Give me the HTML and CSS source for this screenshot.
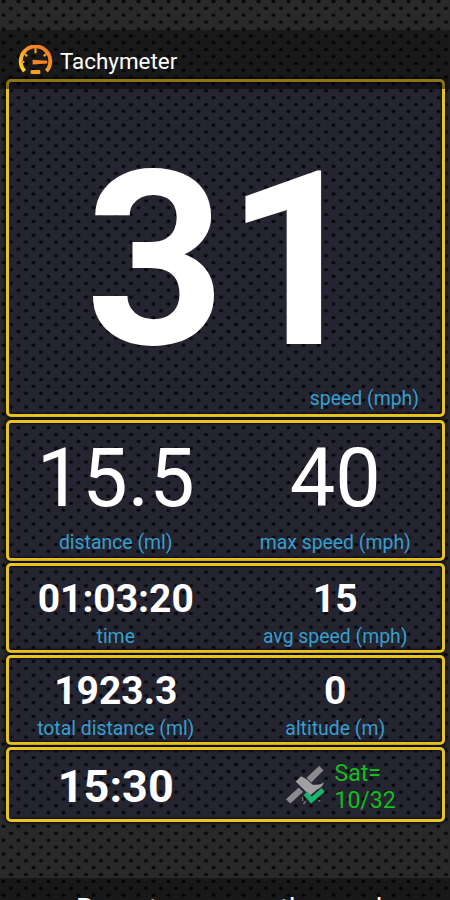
FILE: index.html
```html
<!DOCTYPE html>
<html lang="en">

<head>
  <meta charset="UTF-8" />
  <meta name="viewport" content="width=device-width, initial-scale=1.0" />
  <title>Tachymeter</title>
  <link rel="stylesheet" href="styles.css">
</head>

<body>
  <header class="header">
    <svg class="logo" viewBox="0 0 36 30">
      <defs>
        <linearGradient id="gauge" x1="0" y1="1" x2="1" y2="0">
          <stop offset="0" stop-color="#ffd91a" />
          <stop offset="0.5" stop-color="#fb9a20" />
          <stop offset="1" stop-color="#f0702a" />
        </linearGradient>
      </defs>
      <path d="M6.8 26.5 A15.2 15.2 0 1 1 29.2 26.5" fill="none" stroke="url(#gauge)" stroke-width="4" />
      <path d="M18 3V8M7 9L9.500 11M29 9L26.500 11M3 17H6.500" stroke="#f99a20" stroke-width="2.2" />
      <path d="M15 14.8L30 15.8V18.7L15 19.7Z" fill="#f98225" />
      <rect x="13" y="25.4" width="10" height="4" rx="1" fill="#f9a01f" />
    </svg>
    <h1>Tachymeter</h1>
  </header>

  <main class="panels">
    <section class="panel panel-speed">
      <p class="speed">31</p>
      <p class="label">speed (mph)</p>
    </section>

    <section class="panel panel-large">
      <div class="stat">
        <p class="value">15.5</p>
        <p class="label">distance (ml)</p>
      </div>
      <div class="stat">
        <p class="value">40</p>
        <p class="label">max speed (mph)</p>
      </div>
    </section>

    <section class="panel">
      <div class="stat">
        <p class="value">01:03:20</p>
        <p class="label">time</p>
      </div>
      <div class="stat">
        <p class="value">15</p>
        <p class="label">avg speed (mph)</p>
      </div>
    </section>

    <section class="panel">
      <div class="stat">
        <p class="value">1923.3</p>
        <p class="label">total distance (ml)</p>
      </div>
      <div class="stat">
        <p class="value">0</p>
        <p class="label">altitude (m)</p>
      </div>
    </section>

    <section class="panel panel-status">
      <div class="stat">
        <p class="value">15:30</p>
      </div>
      <div class="satellite">
        <svg class="sat-icon" viewBox="0 0 42 42">
          <path d="M1 35L14 23L18.5 27.5L5.5 39.5Z" fill="#8b8b8e" />
          <path d="M22 13L35 1L39.5 5.5L27 18Z" fill="#8b8b8e" />
          <path d="M11 17L16.5 11.5L23 15L28 20Q35 21 40 18Q38 23 33 25L26 31L21 27Z" fill="#a0a0a3" />
          <path d="M18 33V37M21 37L19 40M34 36L36 37" stroke="#77777c" stroke-width="1.5" />
          <path d="M21 29L27 36L39 25.5" fill="none" stroke="#18b76b" stroke-width="5" />
        </svg>
        <p class="sat-count">Sat=<br>10/32</p>
      </div>
    </section>
  </main>

  <footer class="caption">Remote runs on the road</footer>
</body>

</html>
```

FILE: styles.css
```css
* {
  box-sizing: border-box;
  margin: 0;
  padding: 0;
}

body {
  width: 450px;
  height: 900px;
  overflow: hidden;
  font-family: Roboto, sans-serif;
  color: #fff;
  display: flex;
  flex-direction: column;
}

/* perforated metal, fixed so the holes line up across all panels */
body,
.panel {
  --dot: radial-gradient(ellipse 2.7px 2.2px, #060609 45%, transparent 100%);
  background-color: #292929;
  background-image: var(--dot), var(--dot), var(--dot), var(--dot), var(--dot), var(--dot), var(--dot), var(--dot);
  background-size: 15px 55px;
  background-position: 3.5px -19.2px, -4px -12.3px, 3.5px -5.4px, -4px 1.5px, 3.5px 8.3px, -4px 15.2px, 3.5px 22.1px, -4px 28.9px;
  background-attachment: fixed;
}

.header {
  height: 59px;
  margin-top: 30px;
  padding: 14px 0 0 18px;
  display: flex;
  align-items: flex-start;
  background: linear-gradient(rgba(0, 0, 0, 0.4) 90%, rgba(0, 0, 0, 0.5));
  position: relative;
  z-index: 1;
}

.logo {
  width: 35px;
  height: 30px;
  margin-top: 1px;
}

.header h1 {
  margin-left: 7px;
  font-size: 22.4px;
  line-height: 35px;
  font-weight: 400;
}

.panels {
  margin: -10px 5px 0 6px;
  display: flex;
  flex-direction: column;
  gap: 2px;
}

.panel {
  height: 90px;
  border: 3px solid #e9c31f;
  border-radius: 5px;
  background-color: #252532;
  background-clip: padding-box;
  box-shadow: 0 0 3px 1px #08080c, inset 0 0 2px 1px #0c0c14;
  display: grid;
  grid-template-columns: 1fr 1fr;
  column-gap: 6px;
  text-align: center;
}

.panel-speed {
  height: 338px;
  display: block;
  margin-bottom: 1px;
}

.panel-large {
  height: 141px;
}

.panel-status {
  height: 75px;
}

.speed {
  padding-top: 69px;
  font-size: 244px;
  line-height: 220px;
  font-weight: 700;
}

.label {
  font-size: 19.4px;
  line-height: 24px;
  color: #369fcd;
}

.panel-speed .label {
  padding: 16px 23px 0 0;
  text-align: right;
}

.value {
  font-size: 39px;
  line-height: 40px;
  font-weight: 700;
  padding-top: 13px;
}

.stat .label {
  padding-top: 6px;
}

.panel-large .value {
  padding-top: 15px;
  font-size: 81px;
  line-height: 82px;
  font-weight: 400;
}

.panel-large .label {
  padding-top: 11px;
}

.panel-status .value {
  font-size: 45px;
  padding-top: 17px;
}

.satellite {
  display: flex;
  padding: 10px 0 0 56px;
}

.sat-icon {
  width: 41px;
  height: 41px;
  margin-top: 5px;
}

.sat-count {
  margin-left: 9px;
  font-size: 23px;
  line-height: 27px;
  color: #14bd20;
  text-align: left;
}

.caption {
  height: 22px;
  margin-top: auto;
  padding: 14px 0 0 76px;
  background: rgba(0, 0, 0, 0.4);
  font-size: 28px;
  white-space: nowrap;
  overflow: hidden;
}
```
